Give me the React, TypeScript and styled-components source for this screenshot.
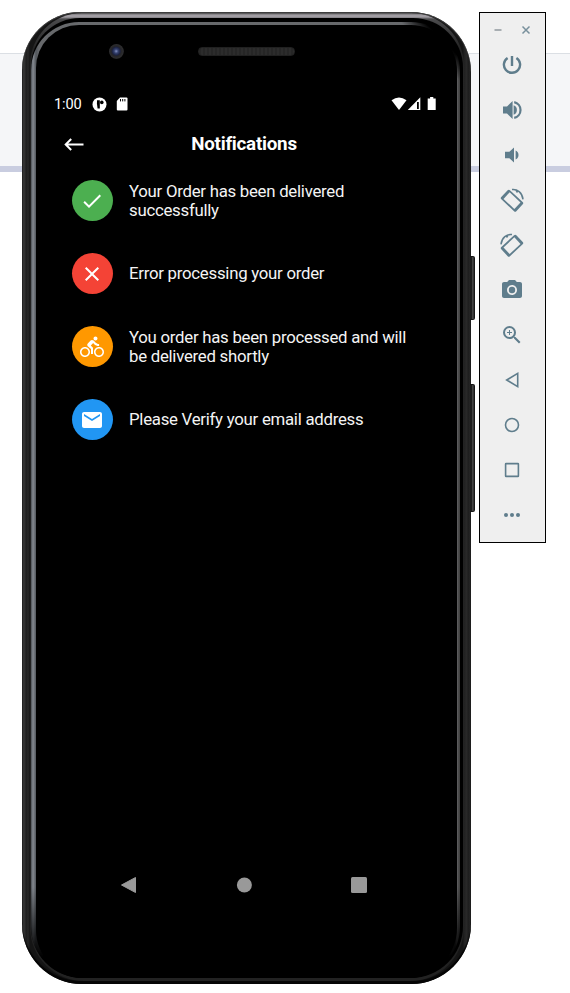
import React from "react";
import styled, { createGlobalStyle } from "styled-components";
import {
  MdCameraAlt,
  MdCheck,
  MdClose,
  MdDirectionsBike,
  MdEmail,
  MdZoomIn,
} from "react-icons/md";

const GlobalStyle = createGlobalStyle`
  * { box-sizing: border-box; }
  body { margin: 0; background: #fff; font-family: Roboto, sans-serif; }
  svg { display: block; flex: none; }
`;

const Desktop = styled.main`
  width: 570px;
  height: 993px;
  overflow: hidden;
  padding: 12px 0 0 22px;
  display: flex;
  align-items: flex-start;
  background: linear-gradient(
    #fff 53px, #dbdfe4 53px, #dbdfe4 54px, #f5f6f8 54px, #f5f6f8 166px,
    #c9cde0 166px, #c9cde0 172px, #fff 172px
  );
`;

const Shell = styled.div`
  position: relative;
  width: 449px;
  height: 972px;
  padding: 1px 7px 3px 8px;
  border-radius: 58px 60px 60px 60px;
  background: linear-gradient(90deg, #151515 0, #343434 1px, #303030 3px, #1d1d1d 4px, #272727 6px, #151515 8px,
    #151515 441px, #202020 442px, #2a2a2a 445px, #1c1c1c 446px, #262626 448px, #151515 449px);
  box-shadow: inset 0 -3px 1px #050505, inset 0 1px 1px #444;
`;

const SideKey = styled.div<{ $top: number; $height: number }>`
  position: absolute;
  left: 448px;
  top: ${(p) => p.$top}px;
  width: 5px;
  height: ${(p) => p.$height}px;
  border-radius: 0 2px 2px 0;
  border: 1px solid #141414;
  border-left: 0;
  background: linear-gradient(90deg, #1c1c1c 40%, #444 60%, #2a2a2a);
`;

const Ridge = styled.div`
  height: 100%;
  padding: 5px 1px 3px 1px;
  border-radius: 52px 53px 54px 54px;
  background: linear-gradient(#454545, #a19da3 2px, #a19da3 4px, #4a4a4c 6px, #242424 36px, #242424 60px, transparent 110px);
  background-color: #222;
`;

const Gap = styled.div`
  height: 100%;
  padding: 4px 3px 0 0;
  border-radius: 49px 50px 52px 52px;
  background: #000;
`;

const Rim = styled.div`
  height: 100%;
  padding: 3px 3px 0 5px;
  border-radius: 48px 49px 51px 51px;
  background:
    linear-gradient(transparent 0, transparent 865px, #000 935px),
    linear-gradient(225deg, #000 0, #000 25px, transparent 42px),
    linear-gradient(90deg, #4c5055 0, #858a91 2px, #52565b 5px, #67696c 8px, #67696c 420px, #303030 424px, #626264 426px, #444 428px);
`;

const Screen = styled.section`
  height: 100%;
  border-radius: 43px 46px 50px 48px;
  background: #000;
  color: #fff;
  display: flex;
  flex-direction: column;
`;

const Hardware = styled.div`
  height: 67px;
  padding: 19px 0 0 73px;
  display: flex;
  align-items: flex-start;
`;

const Lens = styled.div`
  width: 15px;
  height: 15px;
  border-radius: 50%;
  background: radial-gradient(circle at 48% 48%, #8490c2 0, #35426f 2px, #1c2242 4px, #252528 5px, #2d2d2f 7px, #171717 8px);
`;

const Speaker = styled.div`
  width: 97px;
  height: 9px;
  margin: 3px 0 0 74px;
  border-radius: 4px;
  background: repeating-linear-gradient(90deg, #262626 0 2px, #2c2c2c 2px 4px);
  border: 1px solid #202020;
`;

const StatusBar = styled.div`
  height: 24px;
  padding: 0 20px 0 18px;
  display: flex;
  align-items: center;
`;

const Clock = styled.span`
  width: 38px;
  font-size: 14.6px;
  letter-spacing: -0.15px;
`;

const StatusGroup = styled.div<{ $right?: boolean }>`
  display: flex;
  align-items: center;
  gap: 9px;
  margin-left: ${(p) => (p.$right ? "auto" : 0)};
`;

const AppBar = styled.header`
  height: 56px;
  padding: 0 29px 0 26px;
  display: grid;
  grid-template-columns: 24px 1fr 28px;
  align-items: center;
`;

const Title = styled.h1`
  margin: 0;
  text-align: center;
  font-size: 18.8px;
  line-height: 24px;
  font-weight: 700;
  letter-spacing: -0.25px;
  padding-left: 2px;
`;

const List = styled.ul`
  flex: 1;
  margin: 0;
  padding: 8px 40px 0 36px;
  list-style: none;
  display: flex;
  flex-direction: column;
  gap: 32px;
`;

const Item = styled.li`
  height: 41px;
  display: flex;
  align-items: center;
  gap: 16px;
`;

const Avatar = styled.div<{ $color: string }>`
  flex: none;
  width: 41px;
  height: 41px;
  border-radius: 50%;
  background: ${(p) => p.$color};
  display: grid;
  place-items: center;

  svg { margin-right: 1px; }
`;

const Message = styled.p`
  margin: 0;
  font-size: 16.8px;
  line-height: 19px;
  letter-spacing: -0.26px;
  color: #f4f4f4;
  white-space: pre-line;
`;

const NavBar = styled.nav`
  height: 102px;
  padding: 0 90px 0 84px;
  display: flex;
  align-items: flex-start;
  justify-content: space-between;
`;

const Toolbar = styled.aside`
  width: 67px;
  height: 531px;
  margin-left: 8px;
  border: 1px solid #000;
  background: #efefef;
  color: #5f7d8c;
`;

const WindowControls = styled.div`
  height: 29px;
  padding: 5px 12px 0 11px;
  display: flex;
  justify-content: space-between;
  align-items: center;
`;

const Tool = styled.button`
  display: grid;
  place-items: center;
  width: 64px;
  height: 45px;
  padding: 0;
  border: 0;
  background: none;
  color: inherit;
`;

const Glyph = ({ children }: { children: React.ReactNode }) => (
  <svg width="24" height="24" viewBox="0 0 24 24" fill="currentColor">{children}</svg>
);

const Rotated = ({ mirrored }: { mirrored?: boolean }) => (
  <Glyph>
    <g transform={mirrored ? "matrix(-1 0 0 1 24 0)" : undefined}>
      <g transform="translate(12 12.7) rotate(43)">
        <rect x="-10.3" y="-6.3" width="20.6" height="12.6" rx="1.6" />
        <rect x="-7.4" y="-4.5" width="14.8" height="9" fill="#efefef" />
      </g>
      <path d="M12 1.5c5.2-.6 10.2 3 11 9.8M16 2.4l1.5 2.1" fill="none" stroke="currentColor" strokeWidth="1.5" />
    </g>
  </Glyph>
);

const notifications = [
  { color: "#4caf50", icon: MdCheck, text: "Your Order has been delivered\nsuccessfully" },
  { color: "#f44336", icon: MdClose, text: "Error processing your order" },
  { color: "#ff9800", icon: MdDirectionsBike, text: "You order has been processed and will\nbe delivered shortly" },
  { color: "#2196f3", icon: MdEmail, text: "Please Verify your email address" },
];

const tools: [string, React.ReactNode][] = [
  ["Power", <Glyph><path d="M12 3v10M7.6 4.9a8.1 8.1 0 1 0 8.8 0" fill="none" stroke="currentColor" strokeWidth="2.4" /></Glyph>],
  ["Volume up", <Glyph><path d="M3 8.5h4L12.6 3v18L7 15.5H3Z" /><path d="M13.6 7.3a5 5 0 0 1 0 9.4Z" /><path d="M14.2 4.1a8.1 8.1 0 0 1 0 15.8" fill="none" stroke="currentColor" strokeWidth="2.2" /></Glyph>],
  ["Volume down", <Glyph><path d="M5 8.7h4.4l4.6-4.3v15.2l-4.6-4.3H5Z" /><path d="M15.6 7.6a4.8 4.8 0 0 1 0 8.8Z" /></Glyph>],
  ["Rotate left", <Rotated />],
  ["Rotate right", <Rotated mirrored />],
  ["Screenshot", <MdCameraAlt size={24} />],
  ["Zoom", <MdZoomIn size={24} />],
  ["Back", <Glyph><path d="M17.7 5.3v13.4L6.7 12Z" fill="none" stroke="currentColor" strokeWidth="1.6" /></Glyph>],
  ["Home", <Glyph><circle cx="12" cy="12" r="6.5" fill="none" stroke="currentColor" strokeWidth="1.6" /></Glyph>],
  ["Overview", <Glyph><rect x="5.6" y="5.6" width="12.8" height="12.8" rx=".5" fill="none" stroke="currentColor" strokeWidth="1.6" /></Glyph>],
  ["More", <Glyph><circle cx="6" cy="12" r="2" /><circle cx="12" cy="12" r="2" /><circle cx="18" cy="12" r="2" /></Glyph>],
];

export default function App() {
  return (
    <>
      <GlobalStyle />
      <Desktop>
        <Shell>
          <SideKey $top={244} $height={64} />
          <SideKey $top={372} $height={128} />
          <Ridge>
            <Gap>
              <Rim>
                <Screen>
                  <Hardware>
                    <Lens />
                    <Speaker />
                  </Hardware>
                  <StatusBar>
                    <Clock>1:00</Clock>
                    <StatusGroup>
                      <svg width="15" height="15" viewBox="0 0 15 15">
                        <circle cx="7.5" cy="7.5" r="7" fill="#fff" />
                        <path d="M5 3.2h2.8v8.2H5.6Q4.6 7 5 3.2Z" fill="#000" />
                        <circle cx="9.8" cy="5.4" r="1.8" fill="#000" />
                      </svg>
                      <svg width="12" height="14" viewBox="0 0 12 14">
                        <path d="M4 .5h6.5q1 0 1 1v11q0 1-1 1H1.8q-1 0-1-1V4Z" fill="#fff" />
                        <path d="M4.5 2v2.4M6.7 2v2.4M8.9 2v2.4" stroke="#000" />
                      </svg>
                    </StatusGroup>
                    <StatusGroup $right>
                      <svg width="46" height="16" viewBox="0 0 46 16" fill="#fff">
                        <path d="M.5 4.2Q8-1 15.5 4.2L8 14Z" />
                        <path d="M16.8 14 29.3 1.3V14Z" />
                        <path d="M26 6h1.8v7H26Z" fill="#000" />
                        <path d="M36.7 2.5h2.4V.9h3.2v1.6h2.4V14h-8Z" />
                      </svg>
                    </StatusGroup>
                  </StatusBar>
                  <AppBar>
                    <svg width="24" height="24" viewBox="0 0 24 24"><path d="M21.5 12.5H4M9.2 7 3.7 12.5 9.2 18" fill="none" stroke="#fff" strokeWidth="2" /></svg>
                    <Title>Notifications</Title>
                  </AppBar>
                  <List>
                    {notifications.map(({ color, icon: Icon, text }) => (
                      <Item key={text}>
                        <Avatar $color={color}><Icon size={24} /></Avatar>
                        <Message>{text}</Message>
                      </Item>
                    ))}
                  </List>
                  <NavBar>
                    <svg width="17" height="18" viewBox="0 0 17 18"><path d="M15.5 1.5v15L1.5 9Z" fill="#999" stroke="#999" strokeLinejoin="round" /></svg>
                    <svg width="16" height="18" viewBox="0 0 16 18"><circle cx="8.4" cy="9" r="7.5" fill="#999" /></svg>
                    <svg width="16" height="18" viewBox="0 0 16 18"><rect y="1" width="16" height="16" rx="1.5" fill="#999" /></svg>
                  </NavBar>
                </Screen>
              </Rim>
            </Gap>
          </Ridge>
        </Shell>
        <Toolbar>
          <WindowControls>
            <svg width="14" height="10" viewBox="0 0 14 10"><path d="M3.5 5h7" stroke="#8a9298" strokeWidth="1.4" /></svg>
            <svg width="14" height="10" viewBox="0 0 14 10"><path d="m3.5 1.5 7 7m0-7-7 7" stroke="#78909c" strokeWidth="1.5" /></svg>
          </WindowControls>
          {tools.map(([name, icon]) => (
            <Tool key={name} aria-label={name}>{icon}</Tool>
          ))}
        </Toolbar>
      </Desktop>
    </>
  );
}
